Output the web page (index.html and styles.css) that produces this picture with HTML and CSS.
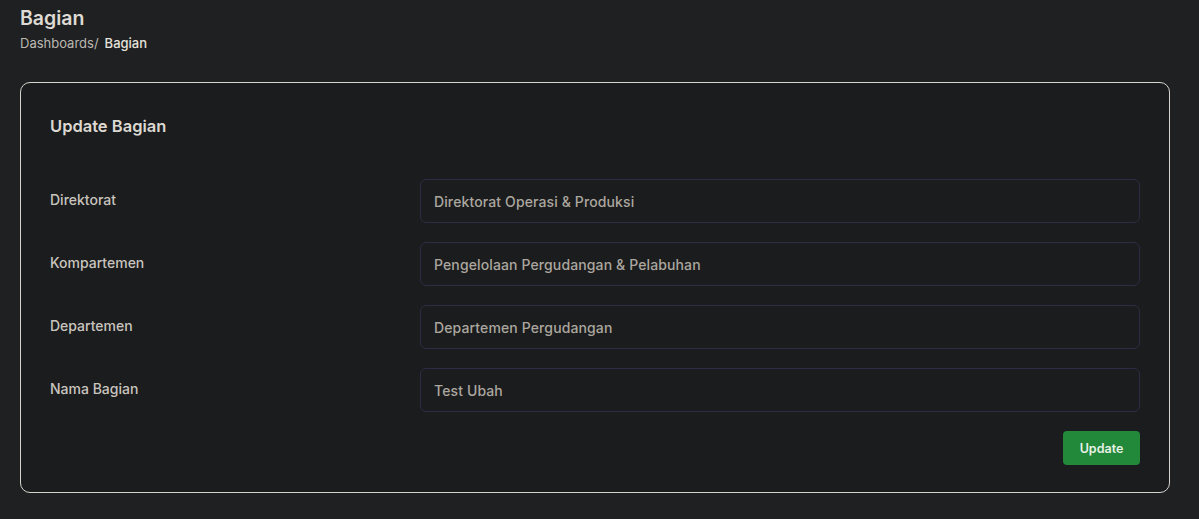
FILE: index.html
```html
<!DOCTYPE html>
<html>
<head>
<meta charset="utf-8">
<link rel="stylesheet" href="styles.css">
</head>
<body>
<div class="page">
  <div class="header">
    <h1 class="title">Bagian</h1>
    <div class="crumbs"><span class="crumb">Dashboards/</span><span class="crumb-current">Bagian</span></div>
  </div>
  <div class="card">
    <h2 class="card-title">Update Bagian</h2>
    <form class="form">
      <div class="row">
        <label class="label">Direktorat</label>
        <div class="input">Direktorat Operasi &amp; Produksi</div>
      </div>
      <div class="row">
        <label class="label">Kompartemen</label>
        <div class="input">Pengelolaan Pergudangan &amp; Pelabuhan</div>
      </div>
      <div class="row">
        <label class="label">Departemen</label>
        <div class="input">Departemen Pergudangan</div>
      </div>
      <div class="row">
        <label class="label">Nama Bagian</label>
        <div class="input">Test Ubah</div>
      </div>
      <div class="actions">
        <button type="button" class="btn">Update</button>
      </div>
    </form>
  </div>
</div>
</body>
</html>
```
FILE: styles.css
```css
* { box-sizing: border-box; }
html, body { margin: 0; padding: 0; }
body {
  background: #1e2022;
  font-family: Inter, "Noto Sans", sans-serif;
  color: #d6d3cc;
  width: 1199px;
  height: 519px;
  overflow: hidden;
}
.page { padding: 6px 29px 0 20px; }
.header { height: 76px; }
.title {
  margin: 0;
  font-size: 19.5px;
  font-weight: 600;
  line-height: 24px;
  color: #dedbd4;
}
.crumbs {
  margin-top: 5px;
  font-size: 13px;
  line-height: 16px;
  display: flex;
  gap: 6px;
}
.crumb { color: #bcb8b1; }
.crumb-current { color: #e6e3dc; font-weight: 500; }
.card {
  border: 1px solid #d6d3cc;
  border-radius: 10px;
  background: #1b1c1e;
  padding: 33px 29px 26px 29px;
  height: 411px;
}
.card-title {
  margin: 0;
  font-size: 16.5px;
  font-weight: 600;
  line-height: 20px;
  color: #dcd9d2;
}
.form { margin-top: 43px; display: flex; flex-direction: column; gap: 19px; }
.row {
  display: grid;
  grid-template-columns: 370px 1fr;
  align-items: start;
}
.label {
  font-size: 14px;
  font-weight: 500;
  color: #c9c5be;
  line-height: 20px;
  padding-top: 11px;
}
.input {
  height: 44px;
  border: 1px solid #2e2b44;
  border-radius: 6px;
  background: #1b1c1e;
  padding: 0 13px;
  display: flex;
  align-items: center;
  font-size: 14px;
  font-weight: 500;
  letter-spacing: 0.12px;
  color: #aba79f;
}
.actions { display: flex; justify-content: flex-end; margin-top: 0; }
.btn {
  background: #22883a;
  border: none;
  border-radius: 4px;
  color: #e8f2e8;
  font-family: Inter, sans-serif;
  font-size: 12.5px;
  font-weight: 600;
  width: 77px;
  height: 34px;
}
```
